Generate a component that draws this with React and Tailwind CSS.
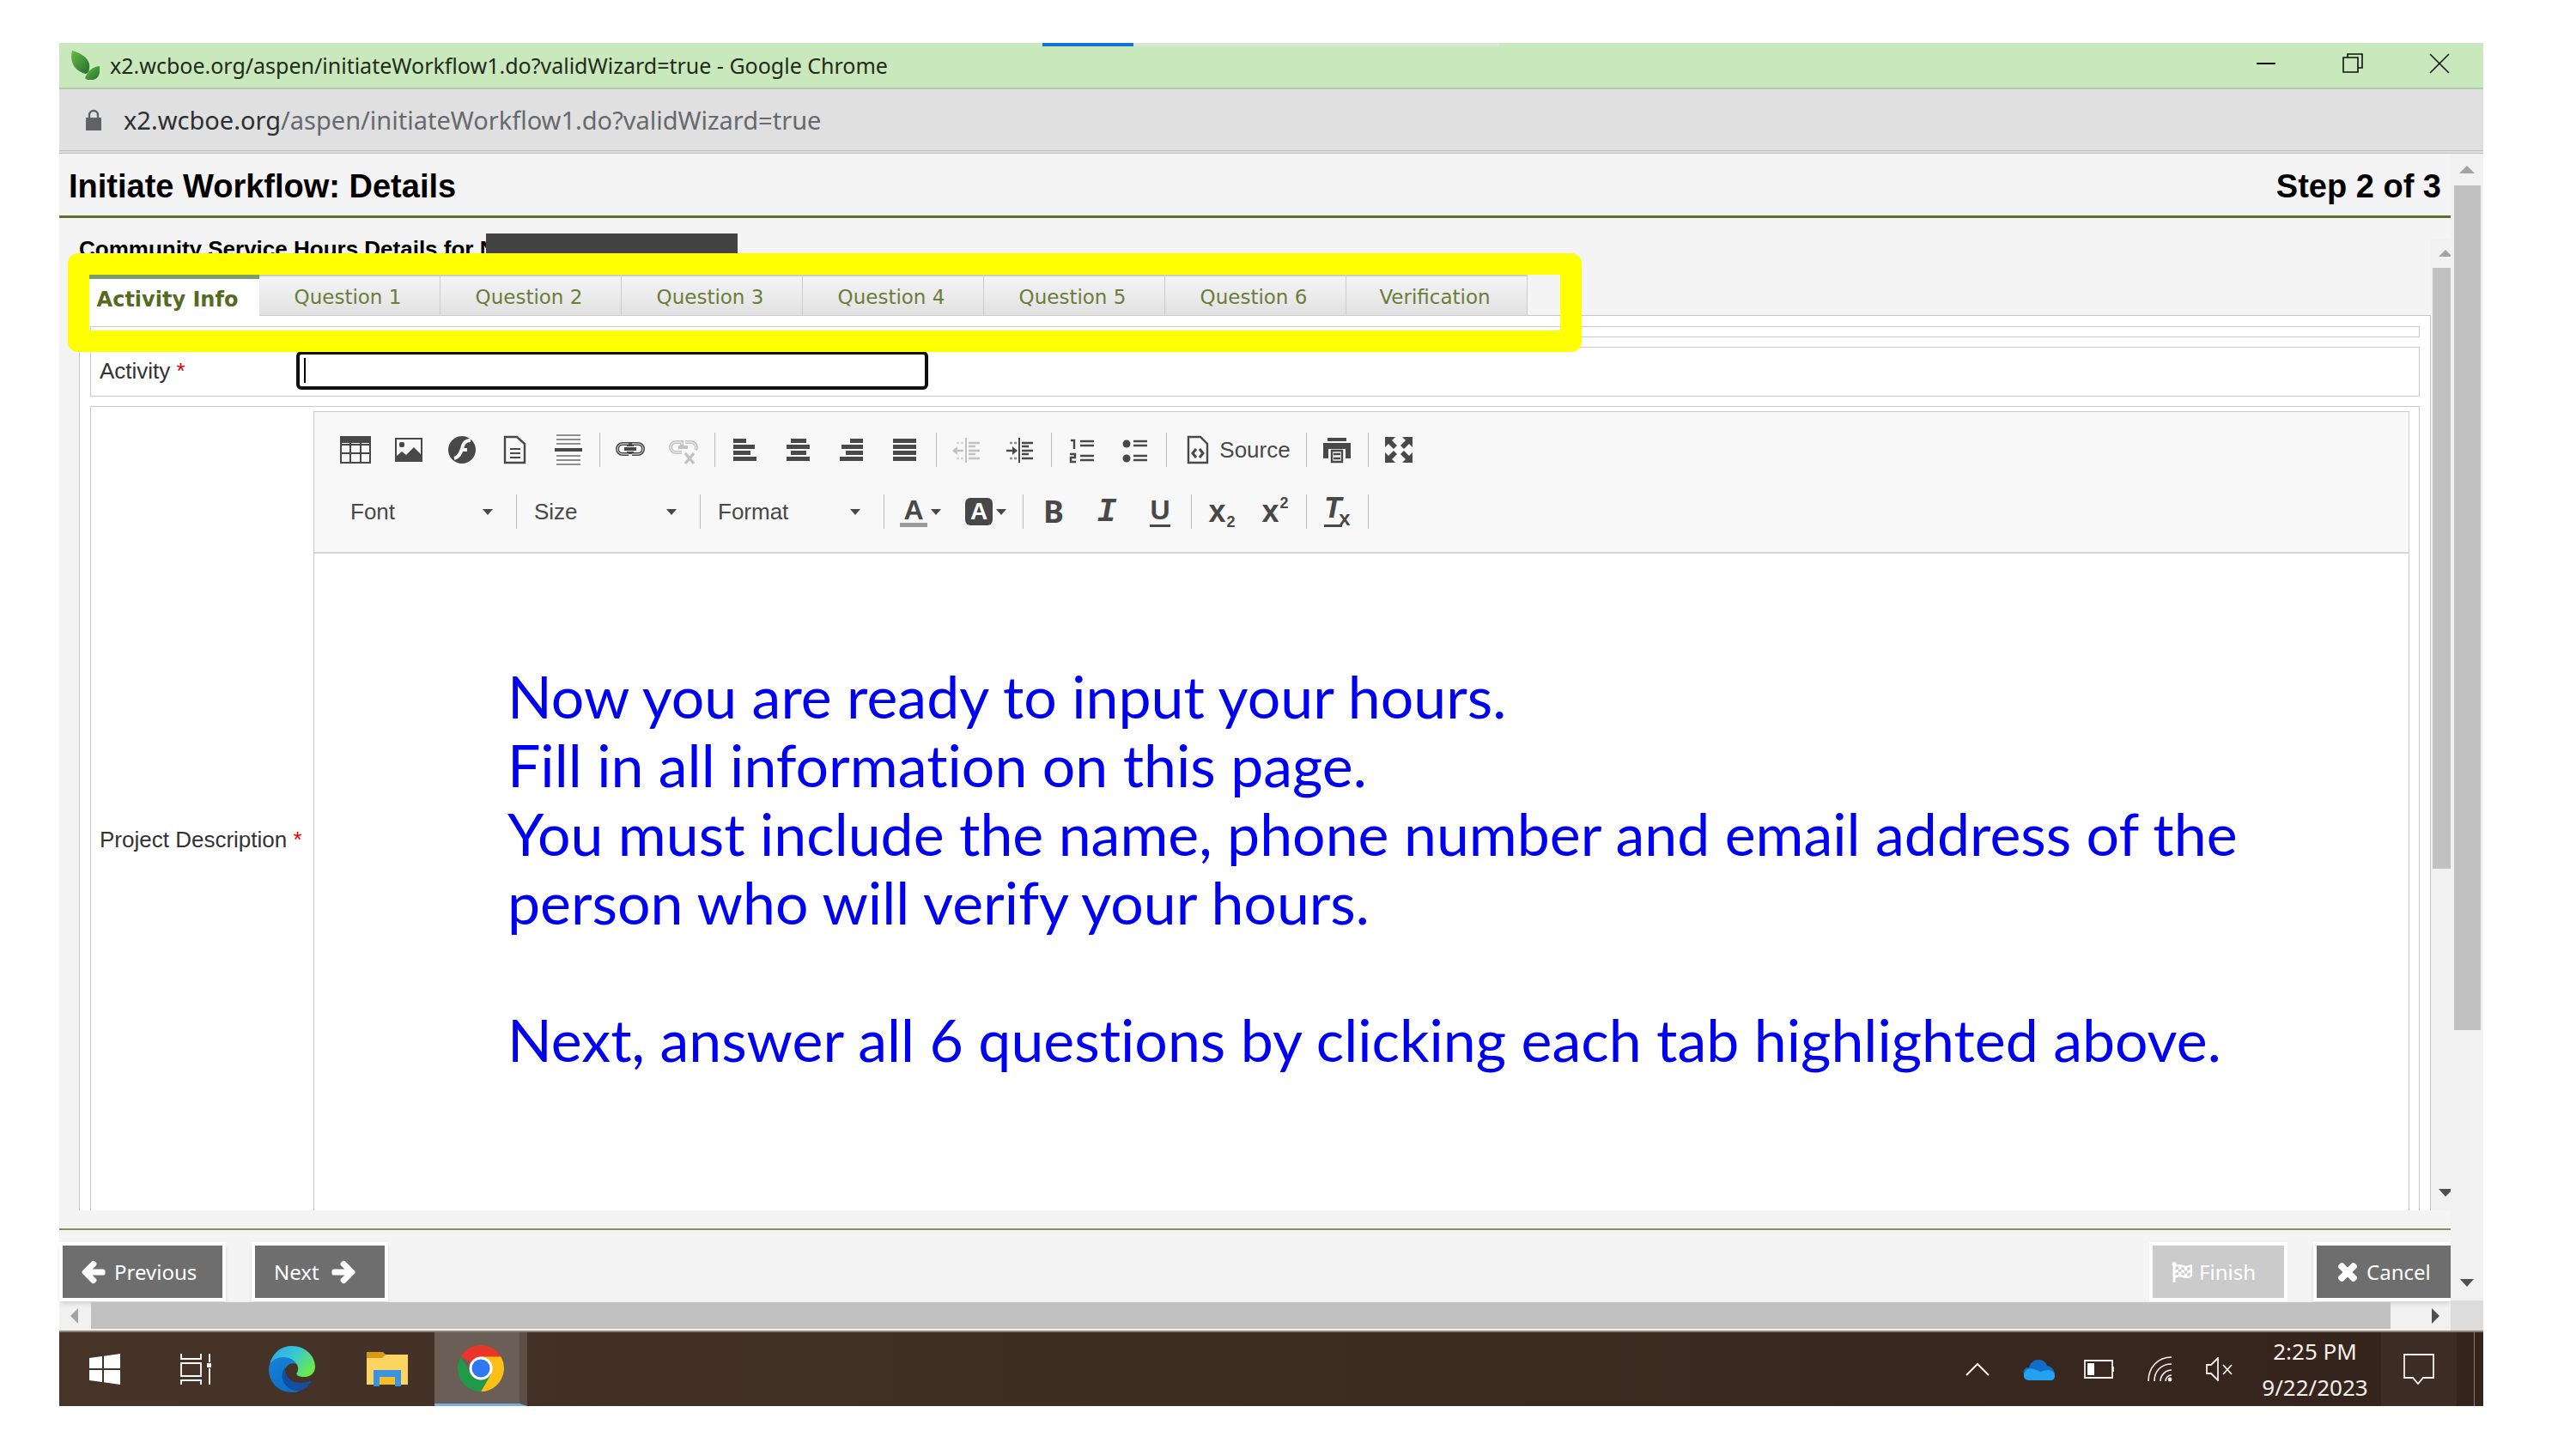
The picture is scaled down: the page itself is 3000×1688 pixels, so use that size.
import { FaArrowLeft, FaArrowRight, FaFlagCheckered, FaTimes } from 'react-icons/fa';

const tabs = ['Activity Info', 'Question 1', 'Question 2', 'Question 3', 'Question 4', 'Question 5', 'Question 6', 'Verification'];

const alignments = {
  left: [[0, 15], [0, 25], [0, 20], [0, 27]],
  center: [[5, 18], [0, 27], [5, 18], [0, 27]],
  right: [[12, 15], [2, 25], [7, 20], [0, 27]],
  justify: [[0, 27], [0, 27], [0, 27], [0, 27]],
};

const Icon = ({ children, className = '' }) => (
  <svg viewBox="0 0 36 36" className={`size-9 ${className}`} aria-hidden="true">{children}</svg>
);

const ToolButton = ({ label, children, className = '' }) => (
  <button type="button" aria-label={label} title={label} className={`flex h-11 w-[62px] shrink-0 items-center justify-center text-[#484848] ${className}`}>
    {children}
  </button>
);

const Separator = () => <span className="mr-1 ml-[5px] h-10 w-px shrink-0 bg-[#bcbcbc]" />;

const Caret = () => (
  <svg viewBox="0 0 12 7" className="h-[7px] w-3 shrink-0" aria-hidden="true"><path d="M0 0h12L6 7z" fill="#484848" /></svg>
);

const AlignIcon = ({ type }) => (
  <Icon>
    {alignments[type].map(([x, w], i) => (
      <rect key={i} x={x + 4} y={5 + i * 7} width={w} height="5" fill="currentColor" />
    ))}
  </Icon>
);

const IndentIcon = ({ arrow }) => (
  <Icon>
    <path d="M17 4v29" stroke="currentColor" strokeWidth="2" />
    <path d="M20 10h13M20 19h13M20 28h13M20 14h8M20 23h8" stroke="currentColor" strokeWidth="2.4" />
    <path d="M6 10h3M11 10h3M6 28h3M11 28h3" stroke="currentColor" strokeWidth="2.4" opacity=".6" />
    <path d="M2 19h12" stroke="currentColor" strokeWidth="2.4" />
    <path d={arrow === 'left' ? 'M7 14 1 19l6 5z' : 'M9 14l6 5-6 5z'} fill="currentColor" />
  </Icon>
);

const ChainLink = ({ broken }) => (
  <Icon>
    <path
      d={broken ? 'M16 21H9a6 6 0 0 1 0-12h7v4M20 9h7a6 6 0 0 1 5 9M12 15h11' : 'M16 23H9a6 6 0 0 1 0-12h7v3M20 23h7a6 6 0 0 0 0-12h-7v3M16 20v3M20 20v3M11 17h14'}
      fill="none" stroke="currentColor" strokeWidth="4" />
    <path d={broken ? 'M16 21H9a6 6 0 0 1 0-12h7v3M20 9h7a6 6 0 0 1 5 8' : 'M16 23H9a6 6 0 0 1 0-12h7M20 23h7a6 6 0 0 0 0-12h-7'} fill="none" stroke="#f8f8f8" strokeWidth="1" />
    {broken && <path d="m20 22 10 12M30 22 20 34" stroke="currentColor" strokeWidth="3.4" />}
  </Icon>
);

const Combo = ({ label }) => (
  <div className="flex w-[204px] shrink-0 items-center">
    <select aria-label={label} className="w-[170px] appearance-none bg-transparent pl-4 text-[26px] leading-8 text-[#484848]">
      <option>{label}</option>
    </select>
    <Caret />
  </div>
);

const Toolbar = () => (
  <div className="flex flex-col gap-7 border-b-2 border-[#d6d6d6] bg-[#f8f8f8] pt-[22px] pb-[25px]">
    <div className="flex items-center pl-[17px]">
      <ToolButton label="Table">
        <Icon>
          <path d="M1 3h34v30H1zM1 12h34M1 22h34M12 9v24M24 9v24" fill="none" stroke="currentColor" strokeWidth="2" />
          <path d="M0 2h36v8H0z" fill="currentColor" />
        </Icon>
      </ToolButton>
      <ToolButton label="Image">
        <Icon>
          <path d="M3 5h30v26H3z" fill="none" stroke="currentColor" strokeWidth="2" />
          <rect x="7" y="9" width="6" height="6" rx="2" fill="currentColor" />
          <path d="M4 30v-5l6-5 5 4 9-9 9 9v6z" fill="currentColor" />
        </Icon>
      </ToolButton>
      <ToolButton label="Flash">
        <Icon>
          <circle cx="18" cy="18" r="16" fill="currentColor" />
          <path d="M28 7c-8 0-9 6-10 10-2 6-4 10-9 11M16 18h8" fill="none" stroke="#f8f8f8" strokeWidth="4" />
        </Icon>
      </ToolButton>
      <ToolButton label="Templates">
        <Icon>
          <path d="M6 3h14l9 8v22H6z" fill="none" stroke="currentColor" strokeWidth="2.4" />
          <path d="M12 17h12M12 22h12M12 27h12" stroke="currentColor" strokeWidth="2" />
        </Icon>
      </ToolButton>
      <ToolButton label="Insert Page Break">
        <Icon>
          <path d="M4 1h28M4 6h28M4 11h28M4 25h28M4 30h28M4 35h28" stroke="currentColor" strokeWidth="1.8" opacity=".6" />
          <path d="M2 18h32" stroke="currentColor" strokeWidth="4" />
        </Icon>
      </ToolButton>
      <Separator />
      <ToolButton label="Link"><ChainLink /></ToolButton>
      <ToolButton label="Unlink" className="opacity-30"><ChainLink broken /></ToolButton>
      <Separator />
      <ToolButton label="Align Left"><AlignIcon type="left" /></ToolButton>
      <ToolButton label="Center"><AlignIcon type="center" /></ToolButton>
      <ToolButton label="Align Right"><AlignIcon type="right" /></ToolButton>
      <ToolButton label="Justify"><AlignIcon type="justify" /></ToolButton>
      <Separator />
      <ToolButton label="Decrease Indent" className="opacity-30"><IndentIcon arrow="left" /></ToolButton>
      <ToolButton label="Increase Indent"><IndentIcon arrow="right" /></ToolButton>
      <Separator />
      <ToolButton label="Numbered List">
        <Icon>
          <path d="M5 7h4v10M4 23h6v4H5v5h6" fill="none" stroke="currentColor" strokeWidth="2.4" />
          <path d="M16 8h16M16 13h16M16 25h16M16 30h16" stroke="currentColor" strokeWidth="2.6" />
        </Icon>
      </ToolButton>
      <ToolButton label="Bulleted List">
        <Icon>
          <circle cx="8" cy="11" r="4.5" fill="currentColor" />
          <circle cx="8" cy="28" r="4.5" fill="currentColor" />
          <path d="M16 8h16M16 13h16M16 25h16M16 30h16" stroke="currentColor" strokeWidth="2.6" />
        </Icon>
      </ToolButton>
      <Separator />
      <button type="button" className="flex h-11 w-[153px] shrink-0 items-center justify-center gap-2 text-[26px] text-[#484848]">
        <Icon>
          <path d="M8 3h14l8 8v22H8z" fill="none" stroke="currentColor" strokeWidth="2.4" />
          <path d="m17 17-4 5 4 5M21 17l4 5-4 5" fill="none" stroke="currentColor" strokeWidth="3" />
        </Icon>
        Source
      </button>
      <Separator />
      <ToolButton label="Print">
        <Icon>
          <path d="M7 4h22v4H7zM2 10h32v18h-6V17H8v11H2z" fill="currentColor" />
          <path d="M12 19h12v13H12zM14 23h8M14 28h8" fill="none" stroke="currentColor" strokeWidth="2.4" />
        </Icon>
      </ToolButton>
      <Separator />
      <ToolButton label="Maximize">
        <Icon>
          <path d="M2 3h12l-4 4 6 6-4 4-6-6-4 4zM34 3v12l-4-4-6 6-4-4 6-6-4-4zM2 33V21l4 4 6-6 4 4-6 6 4 4zM34 33H22l4-4-6-6 4-4 6 6 4-4z" fill="currentColor" />
        </Icon>
      </ToolButton>
    </div>

    <div className="flex items-center pl-[26px]">
      <Combo label="Font" />
      <Separator />
      <Combo label="Size" />
      <Separator />
      <Combo label="Format" />
      <Separator />
      <button type="button" aria-label="Text Color" className="flex h-11 w-[76px] shrink-0 items-center justify-center gap-1 text-[#484848]">
        <span className="h-9 w-8 border-b-5 border-[#9a9a9a] text-center text-[32px] leading-8 font-bold">A</span>
        <Caret />
      </button>
      <button type="button" aria-label="Background Color" className="flex h-11 w-[76px] shrink-0 items-center justify-center gap-1">
        <span className="size-8 rounded-md bg-[#484848] text-center text-[28px] leading-8 font-bold text-white">A</span>
        <Caret />
      </button>
      <Separator />
      <ToolButton label="Bold" className="font-['Noto_Sans',sans-serif] text-[36px] font-bold">B</ToolButton>
      <ToolButton label="Italic" className="font-['Liberation_Mono',monospace] text-[38px] font-bold italic">I</ToolButton>
      <ToolButton label="Underline">
        <span className="h-9 border-b-3 border-[#484848] text-[32px] leading-8 font-bold">U</span>
      </ToolButton>
      <Separator />
      <ToolButton label="Subscript" className="gap-px font-bold">
        <span className="text-[36px] leading-9">x</span><span className="self-end text-lg leading-5">2</span>
      </ToolButton>
      <ToolButton label="Superscript" className="gap-px font-bold">
        <span className="text-[36px] leading-9">x</span><span className="self-start text-lg leading-6">2</span>
      </ToolButton>
      <Separator />
      <ToolButton label="Remove Format">
        <span className="h-9 border-b-3 border-[#484848] font-['Liberation_Mono',monospace] text-[36px] leading-8 font-bold italic">T</span>
        <span className="-ml-1 self-end text-[24px] leading-7 font-bold">x</span>
      </ToolButton>
      <Separator />
    </div>
  </div>
);

const TitleBar = () => (
  <header className="relative flex h-[54px] items-center border-b-2 border-[#b4c8ae] bg-[#c9e9bc] pl-[13px]">
    <span className="absolute top-0 left-[1145px] h-1 w-[106px] bg-[#1473d0]" />
    <span className="absolute top-0 left-[1251px] h-1 w-[426px] bg-[#dde5d8]" />
    <svg viewBox="0 0 34 34" className="size-[34px]" aria-hidden="true">
      <defs>
        <linearGradient id="leaf" x1="0" y1="0" x2="1" y2="1">
          <stop offset="0" stopColor="#6cba45" />
          <stop offset="1" stopColor="#1f6e2e" />
        </linearGradient>
      </defs>
      <path d="M2 0c12 3 22 11 20 20 0 4-2 6-4 7C8 25-2 16 2 0z" fill="url(#leaf)" />
      <path d="M34 18c1 8-1 15-8 16-4 1-7 0-9-2 3-8 8-13 17-14z" fill="url(#leaf)" />
    </svg>
    <p className="flex-1 pl-3 font-['Noto_Sans',sans-serif] text-[25px] leading-8 text-[#1f2b1c]">
      x2.wcboe.org/aspen/initiateWorkflow1.do?validWizard=true - Google Chrome
    </p>
    <div className="flex self-start pt-2 pr-px">
      <button type="button" aria-label="Minimize" className="flex h-8 w-[101px] items-center justify-center">
        <svg viewBox="0 0 24 24" className="size-6"><path d="M1 12h22" stroke="#111" strokeWidth="2" /></svg>
      </button>
      <button type="button" aria-label="Restore" className="flex h-8 w-[101px] items-center justify-center">
        <svg viewBox="0 0 24 24" className="size-6" fill="none" stroke="#111" strokeWidth="1.6"><path d="M1 5h17v17H1zM6 5V1h17v16h-5" /></svg>
      </button>
      <button type="button" aria-label="Close" className="flex h-8 w-[101px] items-center justify-center">
        <svg viewBox="0 0 24 24" className="size-6" stroke="#111" strokeWidth="1.6"><path d="m1 1 22 22M23 1 1 23" /></svg>
      </button>
    </div>
  </header>
);

const FormPanel = () => (
  <section className="h-[1156px] flex-1 overflow-hidden pl-[23px]">
    <h2 className="flex h-[66px] items-start pt-[18px] text-[26px] leading-9 font-bold text-black">
      Community Service Hours Details for N
      <span className="-ml-[11px] h-12 w-[293px] bg-[#434343]" />
    </h2>

    <div className="relative z-10 -mb-px ml-3 flex h-12 w-max font-['DejaVu_Sans',sans-serif] text-[#6b7d3a]" role="tablist">
      {tabs.map((tab, i) => (
        <button
          key={tab}
          type="button"
          role="tab"
          aria-selected={i === 0}
          className={i === 0
            ? 'w-[198px] border-t-5 border-[#7a9c66] bg-white pt-1 pr-4 text-2xl font-bold text-[#556b1f]'
            : 'w-[211px] border-t-2 border-r border-b border-[#cccccc] bg-linear-to-b from-[#f5f5f5] to-[#e1e1e1] pt-1 pr-1 text-[23px]'}
        >
          {tab}
        </button>
      ))}
      <div className="pointer-events-none absolute -top-[25px] -left-[25px] h-[115px] w-[1763px] rounded-xl border-25 border-[#ffff00]" />
    </div>

    <div className="flex flex-col gap-[11px] border border-[#c6c6c6] bg-white p-3">
      <div className="h-[13px] border border-[#cacaca]" />
      <div className="flex h-[58px] items-start border border-[#cacaca] pt-1 text-[26px] text-[#333]">
        <label htmlFor="activity" className="w-[239px] pl-[10px] leading-[46px]">Activity <span className="text-[#e00000]">*</span></label>
        <div className="relative">
          <input id="activity" type="text" className="block h-[45px] w-[736px] rounded-md border-4 border-[#101010] bg-white px-2 outline-none" />
          <span className="absolute top-2 left-[9px] h-[29px] w-[2px] bg-black" />
        </div>
      </div>
      <div className="flex h-[1010px] border border-[#cacaca] text-[26px] text-[#333]">
        <div className="flex w-[259px] items-center pl-[10px]" id="description-label">
          <span className="whitespace-nowrap">Project Description <span className="text-[#e00000]">*</span></span>
        </div>
        <div className="mt-[5px] mr-[11px] flex-1 border border-[#cacaca]" role="group" aria-labelledby="description-label">
          <Toolbar />
          <div className="pt-[126px] pl-[225px] font-['Lato',sans-serif] text-[68px] leading-[80px] whitespace-nowrap text-[#0000f0] [font-variant-ligatures:none]">
            <p>Now you are ready to input your hours.</p>
            <p>Fill in all information on this page.</p>
            <p>You must include the name, phone number and email address of the<br />person who will verify your hours.</p>
            <p className="pt-20">Next, answer all 6 questions by clicking each tab highlighted above.</p>
          </div>
        </div>
      </div>
    </div>
  </section>
);

const wizardButton = "flex h-[69px] items-center border-4 border-white bg-[#6e6e6e] px-[22px] font-['Noto_Sans',sans-serif] text-2xl text-white shadow-md";

const WizardFooter = () => (
  <footer className="flex h-[84px] items-start border-t-2 border-[#87905c] pt-[14px]">
    <button type="button" className={`${wizardButton} w-[194px] gap-[10px]`}>
      <FaArrowLeft size={28} stroke="currentColor" strokeWidth={48} strokeLinejoin="round" className="shrink-0 overflow-visible" /> Previous
    </button>
    <button type="button" className={`${wizardButton} ml-[30px] w-[159px] gap-[14px]`}>
      Next <FaArrowRight size={28} stroke="currentColor" strokeWidth={48} strokeLinejoin="round" className="shrink-0 overflow-visible" />
    </button>
    <button type="button" disabled className="ml-auto flex h-[69px] w-[161px] items-center gap-2 border-4 border-white bg-[#cbcbcb] px-[22px] font-['Noto_Sans',sans-serif] text-2xl text-white">
      <FaFlagCheckered size={24} className="shrink-0" /> Finish
    </button>
    <button type="button" className={`${wizardButton} ml-[30px] w-40 gap-2 border-r-0`}>
      <FaTimes size={28} stroke="currentColor" strokeWidth={48} className="shrink-0 overflow-visible" /> Cancel
    </button>
  </footer>
);

const Taskbar = () => (
  <nav className="flex h-[88px] items-center border-t-2 border-[#8b827b] bg-linear-to-r from-[#463429] to-[#34241b]">
    <button type="button" aria-label="Start" className="flex w-[106px] justify-center">
      <svg viewBox="0 0 36 36" className="size-9"><path d="M0 5l15-2v14H0zM17 2.700 36 0v17H17zM0 19h15v14L0 31zM17 19h19v17l-19-2.700z" fill="#fff" /></svg>
    </button>
    <button type="button" aria-label="Task View" className="flex w-[108px] justify-center">
      <svg viewBox="0 0 38 36" className="h-9 w-[38px]" fill="none" stroke="#fff" strokeWidth="1.800">
        <path d="M1 0v6h23V0M1 11h23v15H1zM1 36v-5h23v5M34 0v10M34 17v19" />
        <path d="M31 11h5v5h-5z" fill="#fff" stroke="none" />
      </svg>
    </button>
    <button type="button" aria-label="Microsoft Edge" className="flex w-[113px] justify-center">
      <svg viewBox="0 0 54 54" className="size-[54px]">
        <defs>
          <linearGradient id="edgeTop" x1="0" y1="0" x2="1" y2=".6">
            <stop offset="0" stopColor="#2aa7e0" />
            <stop offset=".5" stopColor="#37c5d8" />
            <stop offset="1" stopColor="#6be84f" />
          </linearGradient>
          <linearGradient id="edgeLeft" x1="0" y1="0" x2=".4" y2="1">
            <stop offset="0" stopColor="#1583d8" />
            <stop offset="1" stopColor="#0f6fc8" />
          </linearGradient>
        </defs>
        <path d="M1 22C4 8 14 0 27 0c16 0 27 12 27 24 0 8-6 12-12 12-7 0-11-2-9-5 4-7-2-15-12-16C11 14 4 17 1 22z" fill="url(#edgeTop)" />
        <path d="M0 27c0-9 8-14 17-14 8 0 13 4 15 8-6-3-14 2-14 11 0 12 9 20 18 20-3 2-6 2-9 2C11 54 0 42 0 27z" fill="url(#edgeLeft)" />
        <path d="M19 25c-7 9-3 21 8 26 9 4 18-2 22-9 1-2 0-2-2-1-12 5-25 0-27-9-1-3-1-5-1-7z" fill="#134fa0" />
      </svg>
    </button>
    <button type="button" aria-label="File Explorer" className="flex w-[110px] justify-center">
      <svg viewBox="0 0 48 44" className="h-11 w-12">
        <path d="M0 2h19l3 3v5H0z" fill="#d79a12" />
        <path d="M0 9h18l4-4h26v35H0z" fill="#fcd462" />
        <path d="M8 42V23h32v19h-7V31H15v11z" fill="#3a92e0" />
        <path d="M15 31h18v9H15z" fill="#f5bd27" />
      </svg>
    </button>
    <button type="button" aria-label="Google Chrome" className="flex h-full w-[108px] items-center justify-center border-r-9 border-b-3 border-r-[#5a4e46] border-b-[#76b0dd] bg-[#6a5e56] pl-2">
      <svg viewBox="0 0 54 54" className="size-[54px]">
        <path d="M27 27 3.600 13.500A27 27 0 0 1 50.400 13.500z" fill="#ea3529" />
        <path d="M27 13.500h23.400A27 27 0 0 1 27 54L38.700 33.800z" fill="#fbbf16" />
        <path d="M15.300 33.800 3.600 13.500A27 27 0 0 0 27 54l11.700-20.200z" fill="#1f9a48" />
        <circle cx="27" cy="27" r="13.500" fill="#fff" />
        <circle cx="27" cy="27" r="10.500" fill="#2f78f0" />
      </svg>
    </button>

    <div className="ml-auto flex h-full items-center text-[#f3efec]">
      <button type="button" aria-label="Show hidden icons" className="flex w-[71px] justify-center">
        <svg viewBox="0 0 28 16" className="h-4 w-7"><path d="M1 15 14 2l13 13" fill="none" stroke="currentColor" strokeWidth="2" /></svg>
      </button>
      <button type="button" aria-label="OneDrive" className="flex w-[71px] justify-center">
        <svg viewBox="0 0 38 26" className="h-[26px] w-[38px]">
          <path d="M8 11C10 1 25-2 29 9c6 1 9 6 9 10H2C0 14 4 11 8 11z" fill="#0f6cc9" />
          <path d="M2 19c1-5 7-8 12-6l8 3c7-4 16-2 16 5 0 3-2 5-5 5H8c-4 0-7-3-6-7z" fill="#22a2ef" />
        </svg>
      </button>
      <button type="button" aria-label="Battery" className="flex w-[71px] justify-center">
        <svg viewBox="0 0 36 22" className="h-[22px] w-9"><path d="M1 1h32v20H1zM34 8v6" fill="none" stroke="currentColor" strokeWidth="1.800" /><path d="M4 4h8v14H4z" fill="#fff" /></svg>
      </button>
      <button type="button" aria-label="Network" className="flex w-[71px] justify-center">
        <svg viewBox="0 0 30 30" className="size-[30px]" fill="none" stroke="currentColor" strokeWidth="1.600">
          <path d="M1 29C1 13 12 1 28 1M8 29C8 17 16 9 28 9M15 29c0-7 6-13 13-13" />
          <path d="M21 29c0-4 3-7 7-7" />
          <circle cx="26" cy="27" r="2.400" fill="currentColor" stroke="none" />
        </svg>
      </button>
      <button type="button" aria-label="Volume muted" className="flex w-[68px] justify-center">
        <svg viewBox="0 0 32 28" className="h-7 w-8" fill="none" stroke="currentColor" strokeWidth="1.800"><path d="M1 9h5l8-8v26l-8-8H1zM20 9l10 11M30 9 20 20" /></svg>
      </button>
      <p className="w-[154px] text-center font-['Noto_Sans',sans-serif] text-[26px] leading-[42px]">2:25 PM<br />9/22/2023</p>
      <button type="button" aria-label="Notifications" className="flex h-full w-[88px] items-center justify-center bg-[#3c2d25]">
        <svg viewBox="0 0 36 36" className="size-9" fill="none" stroke="currentColor" strokeWidth="1.800"><path d="M1 1h34v27H23l-6 7-6-7H1z" /></svg>
      </button>
      <span className="mr-[10px] ml-5 h-full w-px bg-[#85796f]" />
    </div>
  </nav>
);

const App = () => {
  return (
    <main className="bg-white pt-[50px] pr-[108px] pb-[50px] pl-[69px] font-['Liberation_Sans',Arial,sans-serif]">
      <TitleBar />
      <div className="flex h-[75px] items-center border-b-4 border-double border-[#bdbdbd] bg-[#e0e0e0] pl-[30px]">
        <svg viewBox="0 0 20 26" className="h-[26px] w-5" aria-hidden="true">
          <path d="M1 10h18v15H1z" fill="#5f6368" />
          <path d="M5 11V7a5 5 0 0 1 10 0v4" fill="none" stroke="#5f6368" strokeWidth="2.400" />
        </svg>
        <p className="pl-[25px] font-['Noto_Sans',sans-serif] text-[29px] leading-9 text-[#66696d]">
          <span className="text-[#2c2f33]">x2.wcboe.org</span>/aspen/initiateWorkflow1.do?validWizard=true
        </p>
      </div>

      <div className="flex bg-[#f4f4f4]">
        <div className="min-w-0 flex-1">
          <div className="flex h-[75px] items-center justify-between border-b-3 border-[#5f6f2a] px-[11px] pt-1 text-[38px] font-bold text-black">
            <h1>Initiate Workflow: Details</h1>
            <span>Step 2 of 3</span>
          </div>
          <div className="flex">
            <FormPanel />
            {/* inner scrollbar, its right side runs under the outer one */}
            <div className="mt-6 flex w-[23px] flex-col items-end overflow-hidden bg-[#f1f1f1] pl-[2px]">
              <svg viewBox="0 0 14 8" className="my-[13px] h-2 w-[14px] shrink-0"><path d="M0 8 8 0l6 6v2z" fill="#a3a3a3" /></svg>
              <div className="h-[700px] w-full bg-[#c1c1c1]" />
              <svg viewBox="0 0 14 9" className="mt-auto mb-4 h-[9px] w-[14px] shrink-0"><path d="M0 0h14v3L8 9z" fill="#505050" /></svg>
            </div>
          </div>
          <div className="h-[21px]" />
          <WizardFooter />
        </div>
        <div className="flex w-[38px] flex-col items-center bg-[#f1f1f1]">
          <svg viewBox="0 0 18 9" className="my-[14px] h-[9px] w-[18px] shrink-0"><path d="M0 9 9 0l9 9z" fill="#a3a3a3" /></svg>
          <div className="h-[984px] w-[31px] bg-[#c1c1c1]" />
          <svg viewBox="0 0 16 9" className="mt-auto mb-4 h-[9px] w-4 shrink-0"><path d="M0 0h16L8 9z" fill="#505050" /></svg>
        </div>
      </div>

      <div className="flex h-[35px] items-center bg-[#f1f1f1] pl-[13px]">
        <svg viewBox="0 0 9 18" className="h-[18px] w-[9px]"><path d="M9 0v18L0 9z" fill="#a3a3a3" /></svg>
        <div className="ml-[15px] h-[31px] flex-1 bg-[#c1c1c1]" />
        <svg viewBox="0 0 9 18" className="mr-[13px] ml-12 h-[18px] w-[9px]"><path d="M0 0v18l9-9z" fill="#505050" /></svg>
        <div className="h-full w-[38px] bg-[#dcdcdc]" />
      </div>
      <Taskbar />
    </main>
  );
};

export default App;
